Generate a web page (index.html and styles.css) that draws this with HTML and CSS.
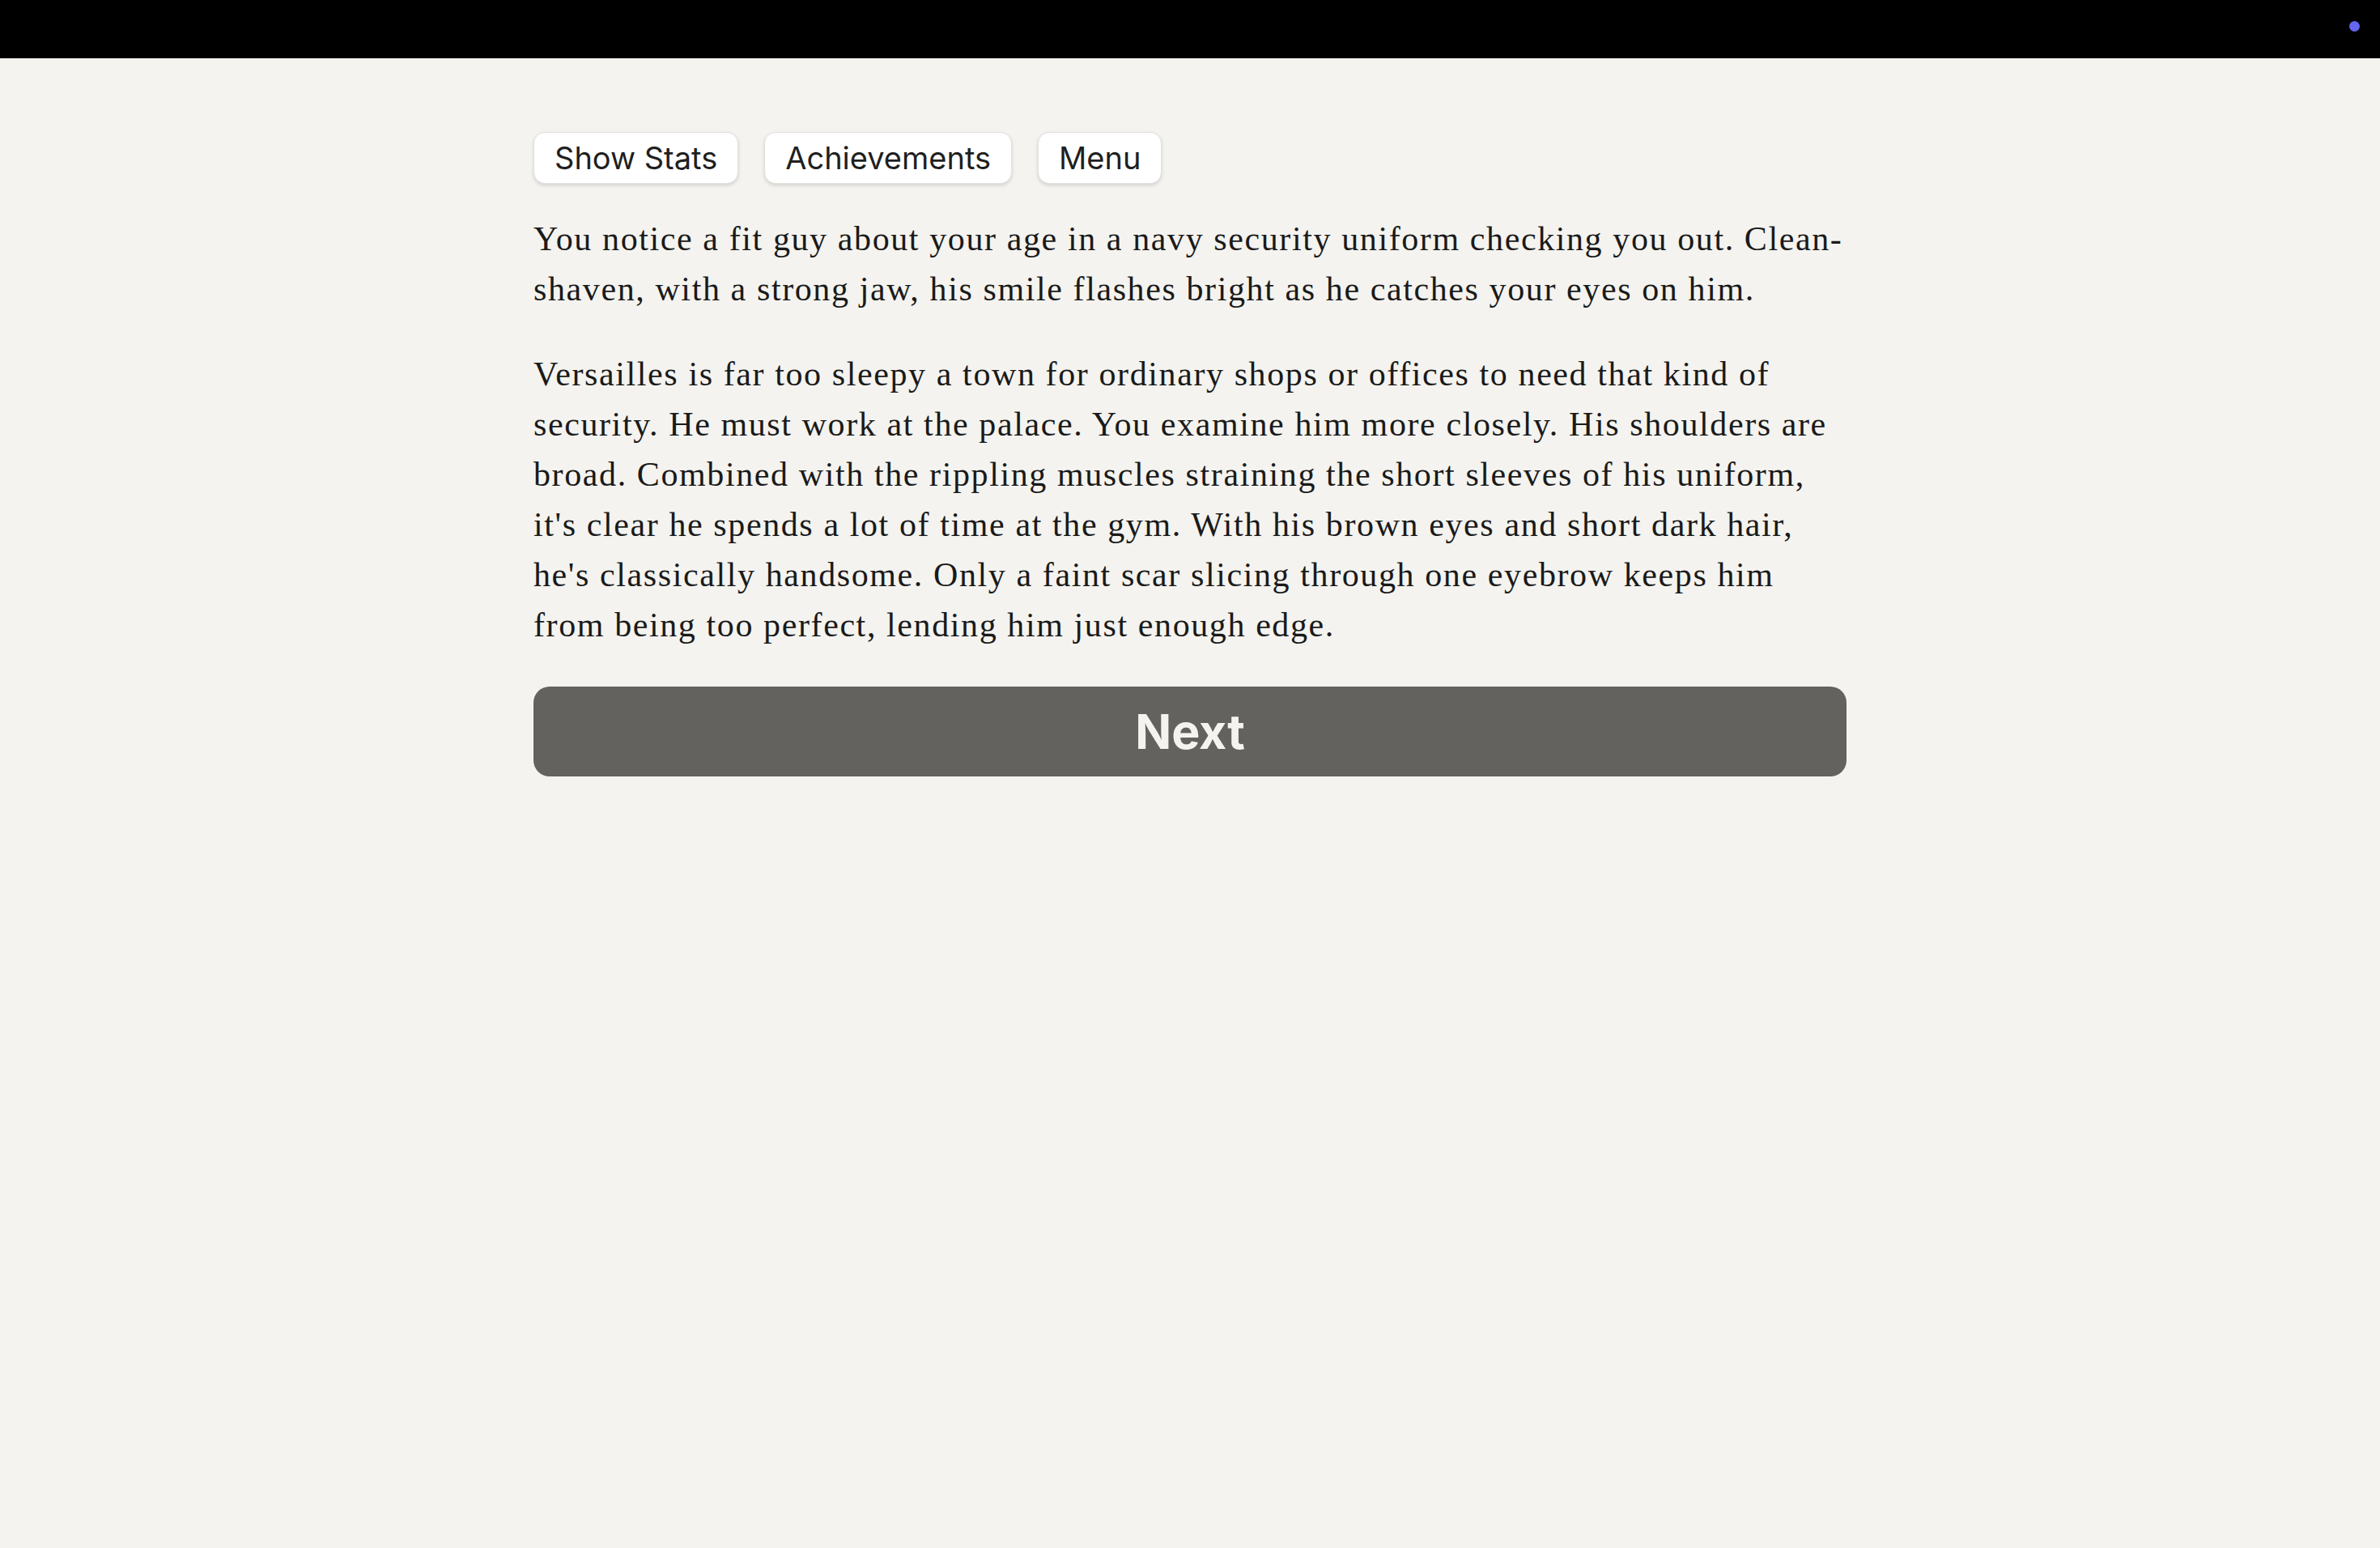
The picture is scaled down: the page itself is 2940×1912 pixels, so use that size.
FILE: index.html
```html
<!DOCTYPE html>
<html lang="en">
<head>
<meta charset="utf-8">
<title>Story</title>
<link rel="stylesheet" href="styles.css">
</head>
<body>
<header class="topbar"><span class="status-dot"></span></header>
<main class="page">
  <nav class="toolbar">
    <button class="tool-btn">Show Stats</button>
    <button class="tool-btn">Achievements</button>
    <button class="tool-btn">Menu</button>
  </nav>
  <section class="story">
    <p>You notice a fit guy about your age in a navy security uniform checking you out. Clean-shaven, with a strong jaw, his smile flashes bright as he catches your eyes on him.</p>
    <p>Versailles is far too sleepy a town for ordinary shops or offices to need that kind of security. He must work at the palace. You examine him more closely. His shoulders are broad. Combined with the rippling muscles straining the short sleeves of his uniform, it's clear he spends a lot of time at the gym. With his brown eyes and short dark hair, he's classically handsome. Only a faint scar slicing through one eyebrow keeps him from being too perfect, lending him just enough edge.</p>
  </section>
  <button class="next-btn">Next</button>
</main>
</body>
</html>
```
FILE: styles.css
```css
html, body {
  margin: 0;
  padding: 0;
  background: #f4f3ef;
}

.topbar {
  height: 72px;
  background: #000;
  display: flex;
  justify-content: flex-end;
  align-items: flex-start;
  box-sizing: border-box;
  padding: 26px 25px 0 0;
}

.status-dot {
  width: 13px;
  height: 13px;
  border-radius: 50%;
  background: #6466ee;
}

.page {
  width: 1622px;
  margin: 0 auto;
  padding-top: 91px;
}

.toolbar {
  display: flex;
  gap: 32px;
}

.tool-btn {
  font-family: Inter, "Liberation Sans", sans-serif;
  font-size: 38px;
  line-height: 46px;
  color: #1f1f1f;
  background: #fff;
  border: 1px solid #e2e1dd;
  border-radius: 14px;
  padding: 8px 25px;
  box-shadow: 0 2px 4px rgba(0, 0, 0, 0.14);
  cursor: pointer;
}

.story {
  margin-top: 37px;
  font-family: "Liberation Serif", serif;
  font-size: 42px;
  line-height: 62px;
  color: #1a1a1a;
  letter-spacing: 1.6px;
}

.story p {
  margin: 0 0 43px 0;
}

.next-btn {
  display: flex;
  width: 100%;
  height: 111px;
  align-items: center;
  justify-content: center;
  margin-top: 45px;
  background: #63625f;
  color: #f4f3ef;
  border: none;
  border-radius: 20px;
  font-family: Inter, "Liberation Sans", sans-serif;
  font-weight: 700;
  font-size: 59px;
  cursor: pointer;
}
```
